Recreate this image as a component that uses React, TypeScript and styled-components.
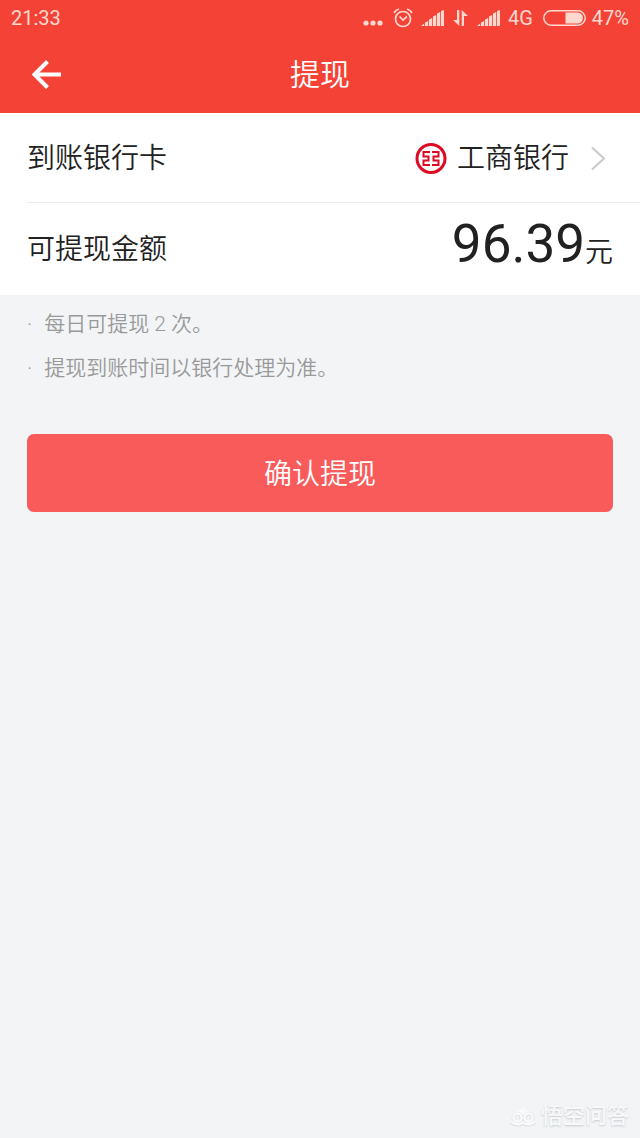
import React from "react";
import styled, { createGlobalStyle } from "styled-components";

const GlobalStyle = createGlobalStyle`
  * { box-sizing: border-box; }
  body {
    margin: 0;
    background: #f2f4f6;
    color: #212121;
    font-family: Roboto, "Noto Sans CJK SC", sans-serif;
    font-weight: 350;
  }
`;

const Screen = styled.div`
  min-height: 100vh;
  display: flex;
  flex-direction: column;
`;

const Header = styled.header`
  background: #f44336;
  color: #fff;
`;

const StatusBar = styled.div`
  display: flex;
  align-items: center;
  height: 36px;
  padding: 0 11px;
  color: #ffd9d0;
  font-size: 20px;
  line-height: 36px;
  font-weight: 400;
`;

const StatusIcons = styled.div`
  display: flex;
  align-items: center;
  gap: 8px;
  margin-left: auto;
`;

const Battery = styled.div`
  display: flex;
  align-items: center;
  gap: 6px;
  padding-left: 2px;
`;

const NavBar = styled.nav`
  display: grid;
  grid-template-columns: 1fr auto 1fr;
  align-items: center;
  height: 77px;
  padding: 0 27px;
`;

const BackButton = styled.button`
  display: flex;
  width: 40px;
  padding: 0;
  border: 0;
  background: none;
  color: inherit;
`;

const Title = styled.h1`
  margin: 0;
  font-size: 30px;
  line-height: 40px;
  font-weight: inherit;
`;

const Card = styled.section`
  padding-left: 27px;
  background: #fff;
`;

const Row = styled.div<{ $divided?: boolean }>`
  display: flex;
  align-items: center;
  justify-content: space-between;
  height: ${(p) => (p.$divided ? 90 : 92)}px;
  padding-top: 2px;
  padding-right: 27px;
  border-bottom: ${(p) => (p.$divided ? "1px solid #ebebeb" : "0")};
  font-size: 28px;
  line-height: 40px;
`;

const BankButton = styled.button`
  display: flex;
  align-items: center;
  gap: 10px;
  padding: 0;
  border: 0;
  background: none;
  color: inherit;
  font: inherit;
`;

const Amount = styled.div`
  display: flex;
  align-items: baseline;
  padding-bottom: 4px;
  line-height: 64px;
`;

const Figure = styled.span`
  font-size: 53px;
  font-weight: 400;
`;

const Tips = styled.ul`
  margin: 0;
  padding: 7px 27px 5px;
  list-style: none;
  color: #999;
  font-size: 21px;
  line-height: 44px;
`;

const Tip = styled.li`
  display: flex;
  gap: 12px;
  &::before { content: "·"; }
`;

const ConfirmButton = styled.button`
  height: 78px;
  margin: 39px 27px 0;
  padding: 0 0 2px;
  border: 0;
  border-radius: 7px;
  background: #f95a5a;
  color: #fff;
  font: inherit;
  font-size: 28px;
`;

const Watermark = styled.footer`
  display: flex;
  align-items: center;
  justify-content: flex-end;
  gap: 4px;
  margin-top: auto;
  padding: 0 11px 6px;
  color: #f8f9fa;
  font-size: 22px;
  line-height: 32px;
  font-weight: 500;
  text-shadow: 0 1px 2px #c8cacd;
`;

const Signal = () => (
  <svg width="23" height="17" viewBox="0 0 23 17" fill="currentColor" aria-hidden="true">
    <path d="M0 16l3.200-2.500V16zM4 12.500l3.200-1.500v5H4zM8 9.500l3.200-1.500v8H8zM12 6.500L15.200 5v11H12zM16 3.500L19.200 2v14H16zM20 1l3-1v16h-3z" />
  </svg>
);

export default function App() {
  return (
    <Screen>
      <GlobalStyle />
      <Header>
        <StatusBar>
          <span>21:33</span>
          <StatusIcons>
            <svg width="22" height="20" viewBox="0 0 22 20" fill="currentColor" aria-hidden="true">
              <circle cx="3" cy="15" r="2.600" /><circle cx="10" cy="15" r="2.600" /><circle cx="17" cy="15" r="2.600" />
            </svg>
            <svg width="20" height="20" viewBox="0 0 20 20" fill="none" stroke="currentColor" strokeWidth="1.700" aria-hidden="true">
              <circle cx="10" cy="11" r="7.500" /><path d="M6.500 8.500L10 12l4-3.500M1 5q1.500-3 5-4M19 5q-1.500-3-5-4" />
            </svg>
            <Signal />
            <svg width="17" height="18" viewBox="0 0 17 18" fill="currentColor" aria-hidden="true">
              <path d="M5 1h2.300v16L1 11h4zM9.700 17V1L16 7h-4v10z" />
            </svg>
            <Signal />
            <span>4G</span>
            <Battery>
              <svg width="43" height="16" viewBox="0 0 43 16" aria-hidden="true">
                <rect x=".8" y=".8" width="41.400" height="14.400" rx="7.200" fill="none" stroke="currentColor" strokeWidth="1.500" />
                <path d="M22.500 2.500h12a5.500 5.500 0 0 1 0 11h-12z" fill="currentColor" />
              </svg>
              <span>47%</span>
            </Battery>
          </StatusIcons>
        </StatusBar>
        <NavBar>
          <BackButton aria-label="返回">
            <svg width="40" height="32" viewBox="0 0 40 32" fill="none" stroke="currentColor" strokeWidth="4" aria-hidden="true">
              <path d="M34 15.500H8M20.500 2.500l-13 13 13 13" />
            </svg>
          </BackButton>
          <Title>提现</Title>
        </NavBar>
      </Header>
      <main>
        <Card>
          <Row $divided>
            <span>到账银行卡</span>
            <BankButton>
              <svg width="32" height="32" viewBox="0 0 32 32" fill="none" stroke="#dc0a22" aria-hidden="true">
                <circle cx="16" cy="15.500" r="14" strokeWidth="3" />
                <path strokeWidth="2" d="M15 9H8.500v4.500h5v4h-5V22H15M17 9h6.500v4.500h-5v4h5V22H17" />
              </svg>
              <span>工商银行</span>
              <svg width="34" height="24" viewBox="0 0 34 24" fill="none" stroke="#ccc" strokeWidth="2.200" aria-hidden="true">
                <path d="M13 .5l12 11-12 11" />
              </svg>
            </BankButton>
          </Row>
          <Row>
            <span>可提现金额</span>
            <Amount><Figure>96.39</Figure>元</Amount>
          </Row>
        </Card>
        <Tips>
          <Tip>每日可提现 2 次。</Tip>
          <Tip>提现到账时间以银行处理为准。</Tip>
        </Tips>
      </main>
      <ConfirmButton>确认提现</ConfirmButton>
      <Watermark>
        <svg width="28" height="24" viewBox="0 0 28 24" fill="none" aria-hidden="true">
          <path d="M4 13q0-5 6-6 2-1 4-5 2 4 4 5 6 1 6 6z" fill="#f9fafb" />
          <g stroke="#dfe1e4" strokeWidth="4"><circle cx="8.500" cy="14" r="4" /><circle cx="19.500" cy="14" r="4" /><path d="M2 18q6 5 12 1 6 4 12-1" /></g>
          <g stroke="#f9fafb" strokeWidth="2.500"><circle cx="8.500" cy="13.500" r="4" /><circle cx="19.500" cy="13.500" r="4" /><path d="M2 17.500q6 5 12 1 6 4 12-1" /></g>
        </svg>
        <span>悟空问答</span>
      </Watermark>
    </Screen>
  );
}
